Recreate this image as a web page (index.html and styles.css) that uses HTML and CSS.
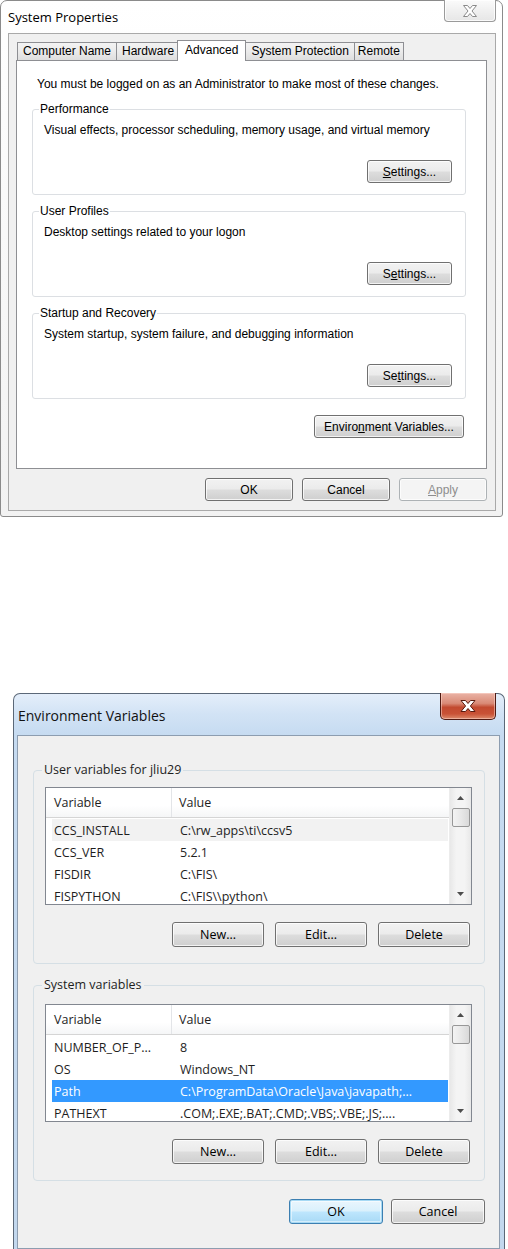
FILE: index.html
```html
<!DOCTYPE html>
<html>
<head>
<meta charset="utf-8">
<link rel="stylesheet" href="styles.css">
</head>
<body>
<div class="screen">
  <div class="win win-sys">
    <div class="titlebar">
      <span class="title">System Properties</span>
      <div class="close close-inactive">
        <svg width="18" height="14" viewBox="0 0 18 14"><path d="M2.5 1.5h4l2.5 3 2.5-3h4l-4.5 5.5 4.5 5.5h-4l-2.5-3-2.5 3h-4l4.5-5.5z" fill="#fff" stroke="#8a8a8a" stroke-width="1"/></svg>
      </div>
    </div>
    <div class="client">
      <div class="tabs">
        <div class="tab tab-first">Computer Name</div>
        <div class="tab">Hardware</div>
        <div class="tab tab-active">Advanced</div>
        <div class="tab">System Protection</div>
        <div class="tab tab-last">Remote</div>
      </div>
      <div class="panel">
        <p class="note">You must be logged on as an Administrator to make most of these changes.</p>
        <fieldset class="group">
          <legend>Performance</legend>
          <p class="desc">Visual effects, processor scheduling, memory usage, and virtual memory</p>
          <div class="group-actions"><button class="btn btn-settings"><u>S</u>ettings...</button></div>
        </fieldset>
        <fieldset class="group">
          <legend>User Profiles</legend>
          <p class="desc">Desktop settings related to your logon</p>
          <div class="group-actions"><button class="btn btn-settings">S<u>e</u>ttings...</button></div>
        </fieldset>
        <fieldset class="group">
          <legend>Startup and Recovery</legend>
          <p class="desc">System startup, system failure, and debugging information</p>
          <div class="group-actions"><button class="btn btn-settings">Se<u>t</u>tings...</button></div>
        </fieldset>
        <div class="env-row"><button class="btn btn-env">Enviro<u>n</u>ment Variables...</button></div>
      </div>
      <div class="dialog-buttons">
        <button class="btn btn-dlg">OK</button>
        <button class="btn btn-dlg">Cancel</button>
        <button class="btn btn-dlg btn-disabled"><u>A</u>pply</button>
      </div>
    </div>
  </div>

  <div class="win win-env">
    <div class="titlebar titlebar-env">
      <span class="title title-env">Environment Variables</span>
      <div class="close close-red">
        <svg width="20" height="14" viewBox="0 0 20 14"><path d="M3 1.5h4.5l2.5 3 2.5-3h4.5l-4.6 5.5 4.6 5.5h-4.5l-2.5-3-2.5 3h-4.5l4.6-5.5z" fill="#fff" stroke="#5a1a0e" stroke-width="1"/></svg>
      </div>
    </div>
    <div class="client client-env">
      <fieldset class="egroup">
        <legend>User variables for jliu29</legend>
        <div class="listview">
          <div class="lv-main">
            <div class="lv-header"><span class="col1">Variable</span><span class="col2">Value</span></div>
            <div class="lv-row lv-row-soft"><span class="col1">CCS_INSTALL</span><span class="col2">C:\rw_apps\ti\ccsv5</span></div>
            <div class="lv-row"><span class="col1">CCS_VER</span><span class="col2">5.2.1</span></div>
            <div class="lv-row"><span class="col1">FISDIR</span><span class="col2">C:\FIS\</span></div>
            <div class="lv-row"><span class="col1">FISPYTHON</span><span class="col2">C:\FIS\\python\</span></div>
          </div>
          <div class="vscroll">
            <svg class="arrow" width="9" height="6" viewBox="0 0 9 6"><path d="M4.5 1L8 5H1z" fill="#4d4d4d"/></svg>
            <div class="thumb"></div>
            <div class="track"></div>
            <svg class="arrow" width="9" height="6" viewBox="0 0 9 6"><path d="M1 1h7L4.5 5z" fill="#4d4d4d"/></svg>
          </div>
        </div>
        <div class="ebtns">
          <button class="btn ebtn">New...</button>
          <button class="btn ebtn">Edit...</button>
          <button class="btn ebtn">Delete</button>
        </div>
      </fieldset>
      <fieldset class="egroup egroup-sys">
        <legend>System variables</legend>
        <div class="listview">
          <div class="lv-main">
            <div class="lv-header"><span class="col1">Variable</span><span class="col2">Value</span></div>
            <div class="lv-row"><span class="col1">NUMBER_OF_P...</span><span class="col2">8</span></div>
            <div class="lv-row"><span class="col1">OS</span><span class="col2">Windows_NT</span></div>
            <div class="lv-row lv-row-sel"><span class="col1">Path</span><span class="col2">C:\ProgramData\Oracle\Java\javapath;...</span></div>
            <div class="lv-row"><span class="col1">PATHEXT</span><span class="col2">.COM;.EXE;.BAT;.CMD;.VBS;.VBE;.JS;....</span></div>
          </div>
          <div class="vscroll">
            <svg class="arrow" width="9" height="6" viewBox="0 0 9 6"><path d="M4.5 1L8 5H1z" fill="#4d4d4d"/></svg>
            <div class="thumb"></div>
            <div class="track"></div>
            <svg class="arrow" width="9" height="6" viewBox="0 0 9 6"><path d="M1 1h7L4.5 5z" fill="#4d4d4d"/></svg>
          </div>
        </div>
        <div class="ebtns">
          <button class="btn ebtn">New...</button>
          <button class="btn ebtn">Edit...</button>
          <button class="btn ebtn">Delete</button>
        </div>
      </fieldset>
      <div class="env-dialog-buttons">
        <button class="btn ebtn-dlg btn-focus">OK</button>
        <button class="btn ebtn-dlg">Cancel</button>
      </div>
    </div>
  </div>
</div>
</body>
</html>
```

FILE: styles.css
```css
html, body {
  margin: 0;
  padding: 0;
  background: #ffffff;
}
body {
  width: 508px;
  height: 1249px;
  overflow: hidden;
  font-family: "Liberation Sans", Arial, sans-serif;
  font-size: 12px;
  color: #000;
}
.screen {
  display: flex;
  flex-direction: column;
}

/* ---------- window frames ---------- */
.win {
  box-sizing: border-box;
  display: flex;
  flex-direction: column;
}
.win-sys {
  width: 503px;
  height: 517px;
  border: 1px solid #8b8b8b;
  border-radius: 7px 7px 3px 3px;
  background: linear-gradient(180deg, #ffffff 0%, #f7f7f7 60%, #f2f2f2 100%);
}
.titlebar {
  height: 32px;
  display: flex;
  justify-content: space-between;
  align-items: flex-start;
  flex: none;
}
.title {
  margin: 8px 0 0 7px;
  font-family: "Open Sans", "Liberation Sans", sans-serif;
  font-size: 13px;
  line-height: 17px;
  color: #000;
}
.close {
  display: flex;
  align-items: center;
  justify-content: center;
  box-sizing: border-box;
}
.close-inactive {
  width: 52px;
  height: 22px;
  margin: -1px 6px 0 0;
  border: 1px solid #9a9a9a;
  border-top: none;
  border-radius: 0 0 4px 4px;
  background: linear-gradient(180deg, #fbfbfb 0%, #f0f0f0 50%, #e6e6e6 100%);
  box-shadow: inset 0 0 0 1px rgba(255,255,255,0.8);
}
.client {
  flex: 1;
  margin: 0 6px 5px 7px;
  border: 1px solid #a9a9a9;
  background: #f0f0f0;
  display: flex;
  flex-direction: column;
}

/* ---------- tabs ---------- */
.tabs {
  display: flex;
  align-items: flex-end;
  height: 20px;
  margin: 6px 0 0 8px;
  position: relative;
  z-index: 1;
}
.tab {
  box-sizing: border-box;
  height: 18px;
  padding: 0 5px;
  line-height: 16px;
  border: 1px solid #8e8f93;
  border-bottom: none;
  margin-right: -1px;
  background: linear-gradient(180deg, #f3f3f3 0%, #ebebeb 50%, #dedede 100%);
  white-space: nowrap;
}
.tab-last {
  padding: 0 3px;
}
.tab-active {
  height: 21px;
  margin: 0 -1px -1px -2px;
  padding: 0 7px;
  line-height: 18px;
  background: #ffffff;
  position: relative;
  z-index: 2;
}
.panel {
  box-sizing: border-box;
  height: 409px;
  margin: 0 8px 0 7px;
  border: 1px solid #8e8f93;
  background: #ffffff;
  padding: 15px 0 0 0;
  display: flex;
  flex-direction: column;
}
.note {
  margin: 0 0 0 20px;
  line-height: 16px;
  white-space: nowrap;
}
.group {
  margin: 9px 20px 0 15px;
  padding: 6px 13px 11px 11px;
  border: 1px solid #dcdfe3;
  border-radius: 3px;
  min-inline-size: 0;
}
.group:first-of-type {
  margin-top: 10px;
}
.group legend {
  margin-left: -5px;
  padding: 0 1px;
  line-height: 14px;
}
.desc {
  margin: 0;
  line-height: 16px;
  white-space: nowrap;
}
.group-actions {
  display: flex;
  justify-content: flex-end;
  margin-top: 22px;
}

/* ---------- buttons ---------- */
.btn {
  box-sizing: border-box;
  font-family: inherit;
  font-size: inherit;
  color: #000;
  padding: 0;
  border: 1px solid #707070;
  border-radius: 3px;
  background: linear-gradient(180deg, #f2f2f2 0%, #ebebeb 49%, #dddddd 51%, #cfcfcf 100%);
  box-shadow: inset 0 0 0 1px rgba(255,255,255,0.75);
  white-space: nowrap;
}
.btn-settings {
  width: 85px;
  height: 23px;
}
.env-row {
  display: flex;
  justify-content: flex-end;
  margin: 16px 22px 0 0;
}
.btn-env {
  width: 150px;
  height: 23px;
}
.dialog-buttons {
  display: flex;
  justify-content: flex-end;
  gap: 9px;
  margin: 9px 8px 0 0;
}
.btn-dlg {
  width: 88px;
  height: 23px;
}
.btn-disabled {
  color: #8d8d8d;
  border-color: #adb2b5;
  background: #f4f4f4;
}

/* ---------- environment window ---------- */
.win-env {
  margin: 176px 0 0 13px;
  width: 492px;
  height: 556px;
  border: 1px solid #5b6878;
  border-bottom: none;
  border-radius: 7px 7px 0 0;
  padding: 0 4px 0 3px;
  background: linear-gradient(180deg, #e4eefa 0px, #d2e3f5 20px, #c6dbf1 41px, #c3d8ee 100%);
  font-family: "Open Sans", "Noto Sans", sans-serif;
  font-size: 12.5px;
}
.titlebar-env {
  height: 41px;
}
.title-env {
  margin: 13px 0 0 1px;
  font-size: 14px;
  line-height: 18px;
  color: #111;
}
.close-red {
  width: 56px;
  height: 27px;
  margin: -1px 4px 0 0;
  border: 1px solid #4f1a12;
  border-top: none;
  border-radius: 0 0 5px 5px;
  background: linear-gradient(180deg, #eab3a6 0%, #d98a76 40%, #c24a30 55%, #c95236 80%, #dc8a6b 100%);
  box-shadow: inset 0 0 0 1px rgba(255,220,210,0.5);
}
.client-env {
  margin: 0;
  border: 1px solid #8d9db0;
  background: #f0f0f0;
}
.egroup {
  margin: 26px 14px 0 15px;
  padding: 9px 12px 16px 11px;
  border: 1px solid #d5dfe5;
  border-radius: 4px;
  min-inline-size: 0;
}
.egroup-sys {
  margin-top: 13px;
  padding-top: 11px;
}
.egroup legend {
  margin-left: -3px;
  padding: 0 2px;
  line-height: 16px;
  color: #1e1e1e;
}
.listview {
  box-sizing: border-box;
  height: 118px;
  border: 1px solid #828790;
  background: #ffffff;
  display: flex;
  overflow: hidden;
}
.lv-main {
  flex: 1;
  min-width: 0;
  display: flex;
  flex-direction: column;
}
.lv-header {
  flex: none;
  height: 30px;
  box-sizing: border-box;
  display: flex;
  align-items: center;
  background: linear-gradient(180deg, #ffffff 0%, #ffffff 60%, #f5f6f7 100%);
  border-bottom: 1px solid #d5d5d5;
  color: #1e1e1e;
}
.lv-header .col1 {
  box-sizing: border-box;
  width: 126px;
  padding-left: 8px;
  height: 100%;
  display: flex;
  align-items: center;
  border-right: 1px solid #e3e5e8;
}
.lv-header .col2 {
  padding-left: 7px;
}
.lv-row {
  flex: none;
  height: 22px;
  display: flex;
  align-items: center;
  margin: 0 1px 0 6px;
  color: #1e1e1e;
  white-space: nowrap;
}
.lv-header + .lv-row {
  margin-top: 1px;
}
.lv-row .col1 {
  width: 120px;
  padding-left: 2px;
  box-sizing: border-box;
}
.lv-row .col2 {
  padding-left: 8px;
}
.lv-row-soft {
  background: #f2f2f2;
}
.lv-row-sel {
  background: #3399ff;
  color: #ffffff;
}
.vscroll {
  flex: none;
  width: 21px;
  display: flex;
  flex-direction: column;
  align-items: center;
  background: linear-gradient(90deg, #e8e8e8 0%, #f4f4f4 30%, #f4f4f4 70%, #e8e8e8 100%);
  border-left: 1px solid #ececec;
}
.vscroll .arrow {
  flex: none;
  margin: 7px 0;
}
.thumb {
  flex: none;
  box-sizing: border-box;
  width: 18px;
  height: 19px;
  border: 1px solid #979797;
  border-radius: 2px;
  background: linear-gradient(90deg, #f3f3f3 0%, #e8e8e8 50%, #d9d9d9 100%);
}
.track {
  flex: 1;
}
.ebtns {
  display: flex;
  justify-content: flex-end;
  gap: 11px;
  margin-top: 17px;
  padding-right: 2px;
}
.ebtn {
  width: 92px;
  height: 25px;
  font-size: 12.5px;
}
.env-dialog-buttons {
  display: flex;
  justify-content: flex-end;
  gap: 8px;
  margin: 18px 14px 0 0;
}
.ebtn-dlg {
  width: 94px;
  height: 25px;
  font-size: 12.5px;
}
.btn-focus {
  border-color: #3c7fb1;
  background: linear-gradient(180deg, #eaf6fd 0%, #d9f0fc 49%, #bee6fd 51%, #a7d9f5 100%);
  box-shadow: inset 0 0 0 1px #a6d9f4, inset 0 0 0 2px rgba(255,255,255,0.5);
}
```
